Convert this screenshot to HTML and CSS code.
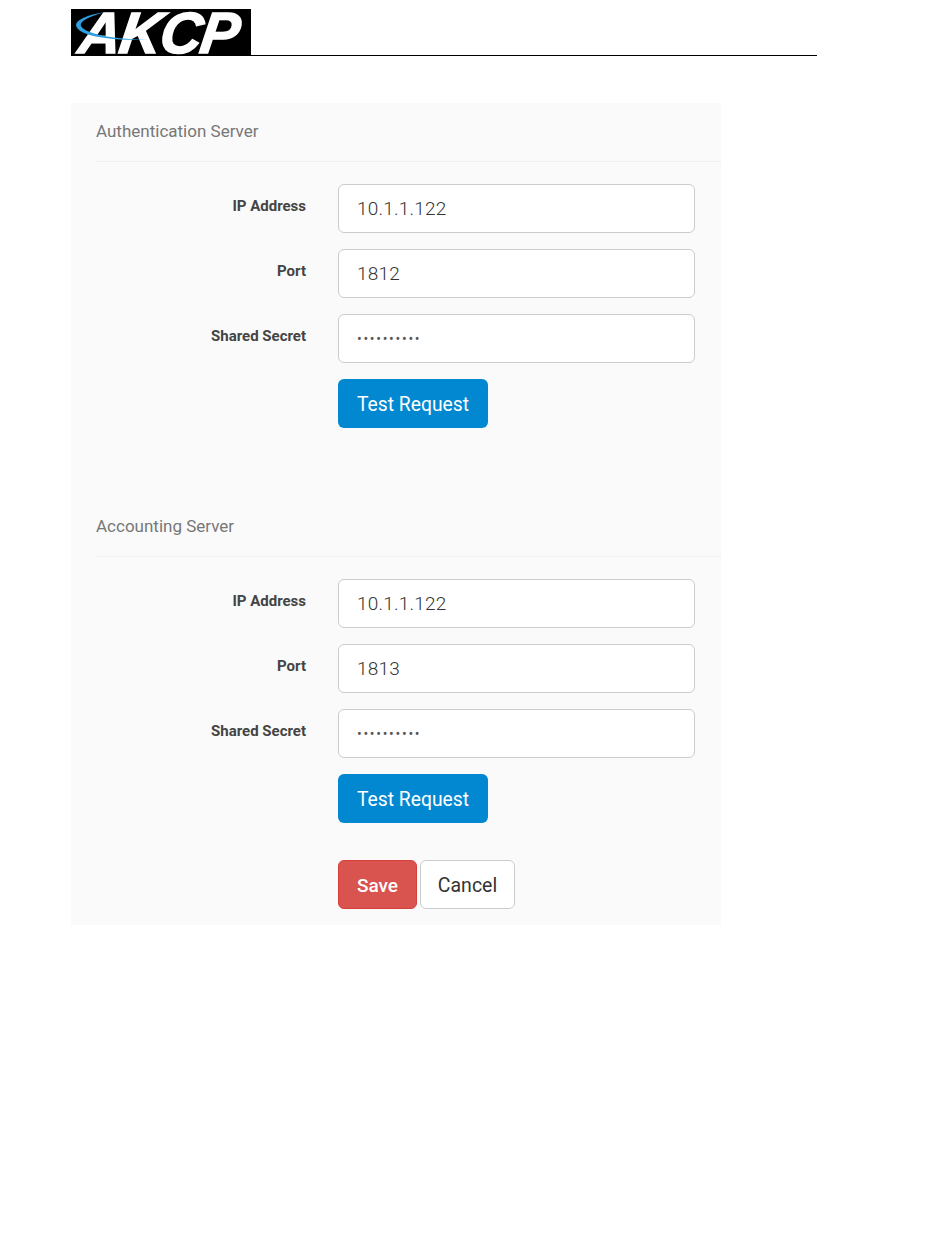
FILE: index.html
```html
<!DOCTYPE html>
<html lang="en">
<head>
    <meta charset="UTF-8">
    <meta name="viewport" content="width=device-width, initial-scale=1.0">
    <title>RADIUS Settings</title>
    <link rel="stylesheet" href="styles.css">
</head>
<body>
    <header class="page-header">
        <div class="logo">
            <span class="logo-text">AKCP</span>
            <svg class="logo-swoosh" width="180" height="46" viewBox="0 0 180 46">
                <path d="M34 3 C16 6 5 11 5 16 C6 25 28 32 84 31 C50 31 15 26 10 17 C8 12 18 8 34 3 Z" fill="#2f9fe0"/>
            </svg>
        </div>
    </header>

    <form class="panel">
        <h2 class="section-title">Authentication Server</h2>
        <div class="field">
            <label class="field-label">IP Address</label>
            <input class="field-input" type="text" value="10.1.1.122">
        </div>
        <div class="field">
            <label class="field-label">Port</label>
            <input class="field-input" type="text" value="1812">
        </div>
        <div class="field">
            <label class="field-label">Shared Secret</label>
            <input class="field-input" type="password" value="0123456789">
        </div>
        <div class="actions">
            <button class="btn btn-blue" type="button">Test Request</button>
        </div>

        <h2 class="section-title section-second">Accounting Server</h2>
        <div class="field">
            <label class="field-label">IP Address</label>
            <input class="field-input" type="text" value="10.1.1.122">
        </div>
        <div class="field">
            <label class="field-label">Port</label>
            <input class="field-input" type="text" value="1813">
        </div>
        <div class="field">
            <label class="field-label">Shared Secret</label>
            <input class="field-input" type="password" value="0123456789">
        </div>
        <div class="actions">
            <button class="btn btn-blue" type="button">Test Request</button>
        </div>

        <div class="actions actions-form">
            <button class="btn btn-red" type="button">Save</button>
            <button class="btn btn-white" type="button">Cancel</button>
        </div>
    </form>
</body>
</html>
```

FILE: styles.css
```css
body {
    font-family: Roboto, "Liberation Sans", sans-serif;
    background-color: #fff;
    margin: 0;
    padding: 9px 133px 0 71px;
}
.page-header {
    border-bottom: 1px solid #000;
    height: 46px;
}
.logo {
    position: relative;
    width: 180px;
    height: 47px;
    background-color: #000;
}
.logo-swoosh {
    position: absolute;
    left: 0;
    top: 0;
}
.logo-text {
    display: block;
    width: 170px;
    font-family: "Liberation Sans", Arial, sans-serif;
    font-weight: bold;
    font-style: italic;
    font-size: 58px;
    line-height: 47px;
    letter-spacing: -1.5px;
    color: #fff;
    -webkit-text-stroke: 1.5px #fff;
    padding-left: 9px;
    transform: skewX(-8deg);
}
.panel {
    width: 650px;
    height: 822px;
    margin-top: 47px;
    background-color: #fafafa;
    padding-left: 25px;
    box-sizing: border-box;
}
.section-title {
    font-size: 17px;
    font-weight: 400;
    line-height: 18px;
    color: #777;
    margin: 0 0 22px;
    padding: 19px 0 21px;
    border-bottom: 1px solid #f0f0f0;
}
.section-second {
    margin-top: 70px;
}
.field {
    display: flex;
    align-items: flex-start;
    gap: 32px;
    margin-bottom: 16px;
}
.field-label {
    width: 210px;
    text-align: right;
    font-size: 15px;
    font-weight: 700;
    line-height: 18px;
    padding-top: 13px;
    color: #444;
}
.field-input {
    width: 357px;
    height: 49px;
    box-sizing: border-box;
    padding: 0 18px;
    font-family: Roboto, "Liberation Sans", sans-serif;
    font-size: 19px;
    font-weight: 300;
    letter-spacing: 0.2px;
    color: #333;
    background-color: #fff;
    border: 1px solid #ccc;
    border-radius: 6px;
}
.field-input[type="password"] {
    font-size: 14px;
    font-weight: 400;
    color: #555;
    letter-spacing: 1.7px;
}
.actions {
    display: flex;
    gap: 3px;
    padding-left: 242px;
}
.actions-form {
    margin-top: 37px;
}
.btn {
    height: 49px;
    box-sizing: border-box;
    padding: 1px 0 0;
    font-family: Roboto, "Liberation Sans", sans-serif;
    font-size: 19.3px;
    white-space: nowrap;
    border: 1px solid transparent;
    border-radius: 6px;
}
.btn-blue {
    width: 150px;
    color: #fff;
    background-color: #0288d1;
}
.btn-red {
    width: 79px;
    color: #fff;
    font-size: 19px;
    font-weight: 500;
    background-color: #d9534f;
    border-color: #d43f3a;
}
.btn-white {
    width: 95px;
    color: #333;
    font-size: 19.5px;
    background-color: #fff;
    border-color: #ccc;
}
```
